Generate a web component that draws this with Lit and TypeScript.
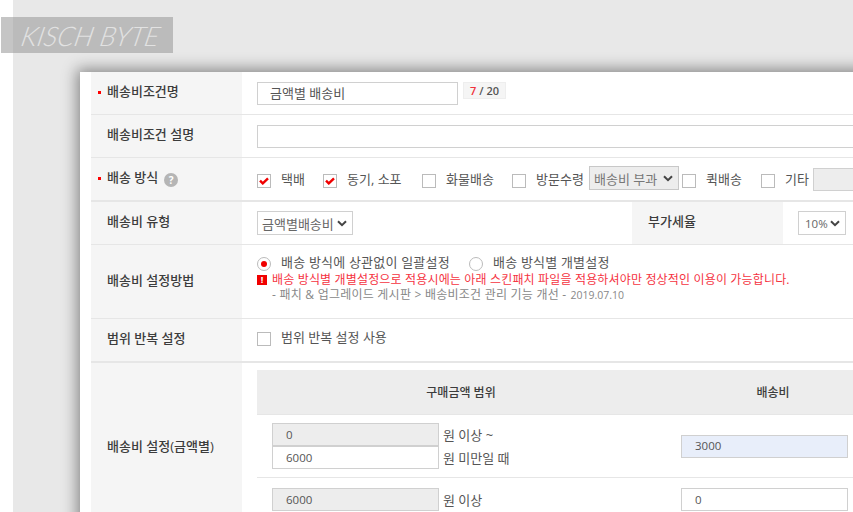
import { LitElement, html, css } from "lit";
import { customElement } from "lit/decorators.js";

const chk = (on: boolean) => html`<span class="chk">${on
  ? html`<svg width="10" height="8" viewBox="0 0 10 8"><path d="M1 3.6 3.8 6.4 9 1.4" fill="none" stroke="#f00000" stroke-width="2.4"/></svg>`
  : ""}</span>`;

@customElement("app-root")
class AppRoot extends LitElement {
  static styles = css`
    :host { display: block; width: 853px; height: 512px; overflow: hidden; position: relative; background: #fff;
      font-family: "Open Sans", "Noto Sans CJK KR", sans-serif; font-size: 13px; color: #555; }
    .desk { margin-left: 13px; height: 512px; padding: 72px 0 0 67px; box-sizing: border-box; background: #e8e8e8; }
    .mark { position: absolute; left: 1px; top: 17px; width: 172px; height: 36px; background: rgba(150,150,150,.55);
      display: flex; align-items: center; padding-left: 21px; box-sizing: border-box; color: #e2e2e2;
      font: italic 300 27px "Lato", sans-serif; }
    .mark span { transform: skewX(-12deg); }
    .win { width: 800px; height: 460px; background: #fff; padding-left: 11px; box-sizing: border-box; overflow: hidden;
      box-shadow: -3px -3px 14px rgba(0,0,0,.42); }
    .row { display: grid; grid-template-columns: 151px 1fr; border-bottom: 1px solid #e6e6e6; box-sizing: border-box; }
    .r1 { height: 43px; } .r2 { height: 43px; } .r3 { height: 44px; border-bottom-width: 2px; }
    .r4 { height: 43px; } .r5 { height: 74px; } .r6 { height: 44px; border-bottom-width: 2px; }
    .th { background: #f5f5f5; display: flex; align-items: center; padding: 0 0 5px 16px; font-weight: 500; color: #3c3c3c;
      position: relative; box-sizing: border-box; }
    .req::before { content: ""; position: absolute; left: 7px; top: 50%; width: 3px; height: 3px; margin-top: -2px; background: #f00; }
    .td { display: flex; align-items: center; padding-left: 15px; min-width: 0; white-space: nowrap; }
    .in { height: 23px; border: 1px solid #d0d0d0; box-sizing: border-box; background: #fff; padding: 0 0 1px 12px;
      display: flex; align-items: center; color: #555; flex: none; }
    .num { font-size: 11.5px; padding-left: 13px; }
    .gray { background: #ededed; }
    .blue { background: #e8eefa; }
    .w200 { width: 201px; }
    .full { width: 700px; }
    .count { margin-left: 5px; width: 43px; height: 17px; margin-top: -5px; background: #f5f5f5; border: 1px solid #eee; box-sizing: border-box;
      display: flex; align-items: center; justify-content: center; font-size: 11px; font-weight: 600; color: #555; gap: 3px; }
    .count b { color: #f0303a; font-weight: 600; }
    .chk { width: 14px; height: 14px; border: 1px solid #bbb; box-sizing: border-box; background: #fff; flex: none;
      display: inline-flex; align-items: center; justify-content: center; }
    .opt { display: flex; align-items: center; flex: none; }
    .opt .chk { margin-top: 4px; }
    .opt span.t { margin-left: 10px; margin-top: -1px; }
    .up { padding-bottom: 6px; }
    .help { width: 14px; height: 14px; margin-left: 6px; margin-top: 7px; border-radius: 50%; background: #b5b5b5; color: #fff; font-size: 10px;
      font-weight: 700; display: flex; align-items: center; justify-content: center; }
    .sel { height: 24px; border: 1px solid #d0d0d0; box-sizing: border-box; background: #fff; display: flex; align-items: center;
      justify-content: space-between; padding: 0 5px 0 4px; flex: none; color: #666; }
    .sel.gray { background: #ededed; color: #777; border-color: #c8c8c8; }
    .sel svg { flex: none; }
    .wide2 { display: grid; grid-template-columns: 390px 151px 1fr; align-items: stretch; padding-left: 0; }
    .wide2 .c { display: flex; align-items: center; padding-left: 15px; }
    .wide2 .h { background: #f5f5f5; display: flex; align-items: center; padding: 0 0 5px 16px; font-weight: 500; color: #3c3c3c; }
    .stack { display: block; padding: 11px 0 0 15px; }
    .line { display: flex; align-items: center; height: 16px; }
    .radio { width: 14px; height: 14px; border: 1px solid #bbb; border-radius: 50%; box-sizing: border-box; flex: none;
      display: inline-flex; align-items: center; justify-content: center; background: #fff; }
    .radio i { width: 6px; height: 6px; border-radius: 50%; background: #f00000; }
    .rt { margin-left: 10px; margin-top: -4px; letter-spacing: .2px; line-height: 14px; }
    .rt1 { width: 178px; flex: none; }
    .err { width: 10px; height: 10px; background: #f00000; color: #fff; font-size: 9px; font-weight: 700; line-height: 10px;
      text-align: center; flex: none; margin-right: 5px; }
    .red { color: #f5333f; font-size: 12px; letter-spacing: .16px; line-height: 12px; }
    .l15 { height: 15px; }
    .note { color: #888; font-size: 12px; letter-spacing: .23px; padding-left: 15px; line-height: 12px; }
    .date { font-size: 10.5px; margin-left: 4px; letter-spacing: 0; }
    .last { height: 200px; }
    .last .td { display: block; padding: 7px 0 0 15px; }
    .it { width: 624px; display: grid; grid-template-columns: 408px 216px; }
    .ih { height: 45px; background: #ededed; display: flex; align-items: center; justify-content: center; font-weight: 500; color: #3c3c3c; font-size: 12px; border-bottom: 1px solid #e6e6e6; box-sizing: border-box; }
    .ic { border-bottom: 1px solid #e6e6e6; box-sizing: border-box; display: flex; align-items: center; }
    .ic1 { padding-left: 15px; }
    .ic2 { padding-left: 16px; }
    .h63 { height: 63px; }
    .h50 { height: 50px; align-items: flex-start; padding-top: 10px; }
    .pair { display: grid; grid-template-columns: 167px auto; column-gap: 4px; align-items: center; }
    .w167 { width: 167px; height: 23px; }
    .lastth { padding-bottom: 36px; }
  `;

  render() {
    const arrow = html`<svg width="10" height="7" viewBox="0 0 10 7"><path d="M1 1.2 5 5.2 9 1.2" fill="none" stroke="#444" stroke-width="2"/></svg>`;
    return html`
      <div class="desk">
        <div class="win">
          <div class="row r1">
            <div class="th req">배송비조건명</div>
            <div class="td"><div class="in w200">금액별 배송비</div><div class="count"><b>7</b>/ 20</div></div>
          </div>
          <div class="row r2">
            <div class="th">배송비조건 설명</div>
            <div class="td"><div class="in full"></div></div>
          </div>
          <div class="row r3">
            <div class="th req">배송 방식<span class="help">?</span></div>
            <div class="td">
              <div class="opt" style="width:66px">${chk(true)}<span class="t">택배</span></div>
              <div class="opt" style="width:99px">${chk(true)}<span class="t">동기, 소포</span></div>
              <div class="opt" style="width:90px">${chk(false)}<span class="t">화물배송</span></div>
              <div class="opt" style="width:77px">${chk(false)}<span class="t">방문수령</span></div>
              <div class="sel gray" style="width:90px;margin-top:-2px">배송비 부과${arrow}</div>
              <div class="opt" style="width:79px;margin-left:3px">${chk(false)}<span class="t">퀵배송</span></div>
              <div class="opt" style="width:52px">${chk(false)}<span class="t">기타</span></div>
              <div class="in gray" style="width:60px"></div>
            </div>
          </div>
          <div class="row r4">
            <div class="th">배송비 유형</div>
            <div class="td wide2">
              <div class="c"><div class="sel" style="width:96px">금액별배송비${arrow}</div></div>
              <div class="h">부가세율</div>
              <div class="c"><div class="sel" style="width:48px"><span class="num" style="padding:0 0 0 2px">10%</span>${arrow}</div></div>
            </div>
          </div>
          <div class="row r5">
            <div class="th">배송비 설정방법</div>
            <div class="td stack">
              <div class="line">
                <span class="radio"><i></i></span><span class="rt rt1">배송 방식에 상관없이 일괄설정</span>
                <span class="radio" style="margin-left:10px"></span><span class="rt">배송 방식별 개별설정</span>
              </div>
              <div class="line l15"><span class="err">!</span><span class="red">배송 방식별 개별설정으로 적용시에는 아래 스킨패치 파일을 적용하셔야만 정상적인 이용이 가능합니다.</span></div>
              <div class="line note l15">- 패치 &amp; 업그레이드 게시판 &gt; 배송비조건 관리 기능 개선 -<span class="date">2019.07.10</span></div>
            </div>
          </div>
          <div class="row r6">
            <div class="th">범위 반복 설정</div>
            <div class="td up"><div class="opt">${chk(false)}<span class="t">범위 반복 설정 사용</span></div></div>
          </div>
          <div class="row last" style="border:0">
            <div class="th lastth">배송비 설정(금액별)</div>
            <div class="td">
              <div class="it">
                <div class="ih">구매금액 범위</div><div class="ih">배송비</div>
                <div class="ic ic1 h63"><div class="pair">
                  <div class="in gray w167 num">0</div><span>원 이상 ~</span>
                  <div class="in w167 num">6000</div><span>원 미만일 때</span>
                </div></div>
                <div class="ic ic2 h63"><div class="in blue w167 num">3000</div></div>
                <div class="ic ic1 h50"><div class="pair"><div class="in gray w167 num">6000</div><span>원 이상</span></div></div>
                <div class="ic ic2 h50"><div class="in w167 num">0</div></div>
              </div>
            </div>
          </div>
        </div>
      </div>
      <div class="mark"><span>KISCH BYTE</span></div>
    `;
  }
}
